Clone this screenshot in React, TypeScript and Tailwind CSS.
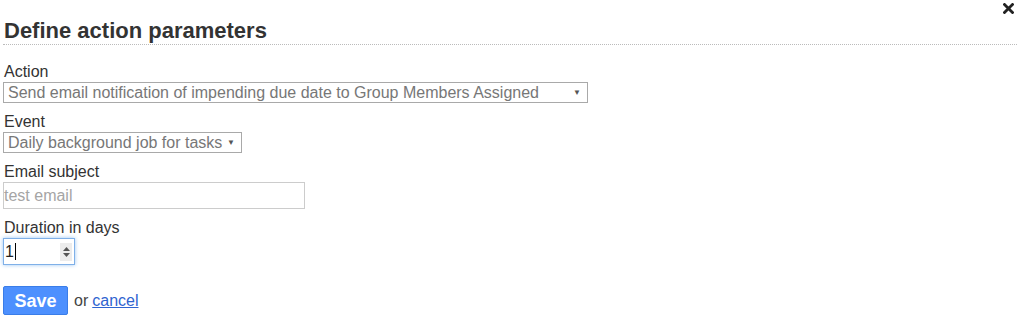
import React from 'react';

function CloseIcon() {
  return (
    <svg width="11" height="11" viewBox="0 0 11 11" className="block">
      <path d="M1.5 1.5 L9.5 9.5 M9.5 1.5 L1.5 9.5" stroke="#222" strokeWidth="2.8" strokeLinecap="square" />
    </svg>
  );
}

function Caret() {
  return <span className="text-[8px] leading-none text-[#555]">▼</span>;
}

function FakeSelect({ value, width }: { value: string; width: string }) {
  return (
    <div
      className={`flex items-center justify-between h-[21px] border border-[#a9a9a9] bg-white pl-[4px] pr-[6px] text-[16px] leading-[19px] text-[#777] ${width}`}
    >
      <span className="whitespace-nowrap">{value}</span>
      <Caret />
    </div>
  );
}

export default function App() {
  return (
    <div className="relative bg-white px-[3px] pt-[18px] h-[319px] text-[#333] font-['Liberation_Sans',Arial,sans-serif]">
      {/* close button */}
      <button className="absolute top-[3px] right-[6px]">
        <CloseIcon />
      </button>

      <h2 className="pl-[1px] h-[27px] leading-[26px] text-[22px] font-bold text-[#333] border-b border-dotted border-[#bbb]">
        Define action parameters
      </h2>

      <form onSubmit={(e) => e.preventDefault()}>
        <label className="block mt-[18px] pl-[1px] text-[16px] leading-[18px]">Action</label>
        <div className="mt-[1px]">
          <FakeSelect
            width="w-[585px]"
            value="Send email notification of impending due date to Group Members Assigned"
          />
        </div>

        <label className="block mt-[10px] pl-[1px] text-[16px] leading-[18px]">Event</label>
        <div className="mt-[1px]">
          <FakeSelect width="w-[239px]" value="Daily background job for tasks" />
        </div>

        <label className="block mt-[10px] pl-[1px] text-[16px] leading-[18px]">Email subject</label>
        <input
          className="block mt-[1px] w-[302px] h-[27px] border border-[#ccc] px-0 text-[16px] text-[#333] placeholder:text-[#a5a5a5] outline-none"
          placeholder="test email"
        />

        <label className="block mt-[10px] pl-[1px] text-[16px] leading-[18px]">Duration in days</label>
        <div className="mt-[1px] flex items-center justify-between w-[72px] h-[27px] border border-[#7fb0e8] shadow-[0_0_4px_#9cc6f2] pl-[1px] pr-[2px] bg-white">
          <span className="flex items-center text-[16px] leading-[18px] text-[#222]">
            1<span className="ml-[1px] inline-block w-px h-[17px] bg-black" />
          </span>
          <span className="flex flex-col items-center justify-center gap-[2px] w-[12px] h-[18px] bg-[#ececec]">
            <svg width="7" height="4" viewBox="0 0 7 4"><path d="M0 4 L3.5 0 L7 4 Z" fill="#555" /></svg>
            <svg width="7" height="4" viewBox="0 0 7 4"><path d="M0 0 L3.5 4 L7 0 Z" fill="#555" /></svg>
          </span>
        </div>

        <div className="mt-[21px] flex items-center">
          <button
            type="submit"
            className="h-[29px] w-[65px] rounded-[2px] border border-[#3a7de8] bg-[#4d90fe] text-[18px] font-bold text-white leading-none"
          >
            Save
          </button>
          <span className="ml-[6px] text-[16px] text-[#444]">or</span>
          <a href="#" className="ml-[4px] text-[16px] text-[#2f64d0] underline">
            cancel
          </a>
        </div>
      </form>
    </div>
  );
}
